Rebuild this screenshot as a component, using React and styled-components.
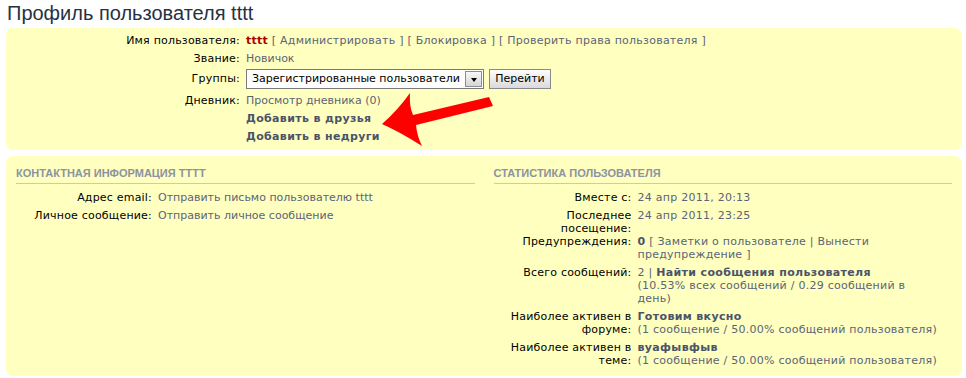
import React from "react";
import styled, { createGlobalStyle } from "styled-components";

const GlobalStyle = createGlobalStyle`
  body {
    margin: 0;
    background: #fff;
    font-family: "DejaVu Sans", Verdana, sans-serif;
    font-size: 11px;
    color: #000;
  }
`;

const Page = styled.div`
  position: relative;
  width: 966px;
  padding: 0 4px 0 6px;
  box-sizing: border-box;
`;

const Title = styled.h2`
  margin: 0;
  height: 28px;
  line-height: 26px;
  padding-left: 1px;
  font-family: "Liberation Sans", Arial, sans-serif;
  font-weight: normal;
  font-size: 20px;
  color: #28313f;
`;

const Panel = styled.div`
  background: #ffffc0;
  border-radius: 7px;
  padding: ${(p) => p.$padding || "10px"};
  margin-bottom: 6px;
`;

const Columns = styled.div`
  display: grid;
  grid-template-columns: 1fr 1fr;
  column-gap: 19px;
`;

const Heading = styled.h3`
  margin: 0 0 7px;
  padding-bottom: 3px;
  border-bottom: 1px solid #c9c9c4;
  font-family: "Liberation Sans", Arial, sans-serif;
  font-size: 11px;
  line-height: 14px;
  font-weight: bold;
  text-transform: uppercase;
  color: #8c93a0;
`;

const Row = styled.div`
  display: grid;
  grid-template-columns: ${(p) => p.$label}px 1fr;
  column-gap: 6px;
  line-height: ${(p) => p.$line || 13}px;
  padding: ${(p) => p.$pad || "0"};
  margin-bottom: ${(p) => (p.$flush ? 0 : p.$gap || 0)}px;
`;

const Label = styled.div`
  text-align: right;
  color: #000;
  letter-spacing: 0.2px;
`;

const Value = styled.div`
  color: #5a6478;
  letter-spacing: ${(p) => (p.$wide ? "0.25px" : "0")};
`;

const Name = styled.b`
  color: #aa0000;
`;

const Strong = styled.b`
  color: #4a5468;
  letter-spacing: 0.35px;
`;

const Select = styled.div`
  display: flex;
  align-items: center;
  justify-content: space-between;
  box-sizing: border-box;
  width: 238px;
  height: 20px;
  border: 1px solid #7b7b7b;
  background: #fff;
  padding: 0 1px 0 5px;
  color: #000;
`;

const DropButton = styled.span`
  display: flex;
  align-items: center;
  justify-content: center;
  box-sizing: border-box;
  width: 17px;
  height: 16px;
  border: 1px solid #8e8e8e;
  background: linear-gradient(#f8f8f8, #d6d6d6);
`;

const Triangle = styled.span`
  width: 0;
  height: 0;
  border-left: 3.5px solid transparent;
  border-right: 3.5px solid transparent;
  border-top: 4px solid #000;
  margin-top: 2px;
`;

const Controls = styled.div`
  display: flex;
  gap: 5px;
`;

const Button = styled.span`
  display: flex;
  align-items: center;
  justify-content: center;
  box-sizing: border-box;
  width: 62px;
  height: 20px;
  border: 1px solid #8a8a8a;
  background: linear-gradient(#fdfdfd, #dadada);
  color: #000;
`;

const Arrow = styled.svg`
  position: absolute;
  left: 0;
  top: 0;
  pointer-events: none;
`;

export default function App() {
  return (
    <Page>
      <GlobalStyle />
      <Title>Профиль пользователя tttt</Title>

      <Panel $padding="4px 10px 4px">
        <Row $label={224} $line={18}>
          <Label>Имя пользователя:</Label>
          <Value $wide>
            <Name>tttt</Name> [ Администрировать ] [ Блокировка ] [ Проверить права пользователя ]
          </Value>
        </Row>
        <Row $label={224} $line={18}>
          <Label>Звание:</Label>
          <Value>Новичок</Value>
        </Row>
        <Row $label={224} $line={20} $pad="1px 0 3px">
          <Label>Группы:</Label>
          <Controls>
            <Select>
              Зарегистрированные пользователи
              <DropButton>
                <Triangle />
              </DropButton>
            </Select>
            <Button>Перейти</Button>
          </Controls>
        </Row>
        <Row $label={224} $line={18}>
          <Label>Дневник:</Label>
          <Value>Просмотр дневника (0)</Value>
        </Row>
        <Row $label={224} $line={18}>
          <Label />
          <Value>
            <Strong>Добавить в друзья</Strong>
          </Value>
        </Row>
        <Row $label={224} $line={18}>
          <Label />
          <Value>
            <Strong>Добавить в недруги</Strong>
          </Value>
        </Row>
      </Panel>

      <Panel $padding="10px 10px 9px">
        <Columns>
          <div>
            <Heading>Контактная информация tttt</Heading>
            <Row $label={136} $gap={5}>
              <Label>Адрес email:</Label>
              <Value>Отправить письмо пользователю tttt</Value>
            </Row>
            <Row $label={136} $gap={5}>
              <Label>Личное сообщение:</Label>
              <Value>Отправить личное сообщение</Value>
            </Row>
          </div>
          <div>
            <Heading>Статистика пользователя</Heading>
            <Row $label={138} $gap={5}>
              <Label>Вместе с:</Label>
              <Value $wide>24 апр 2011, 20:13</Value>
            </Row>
            <Row $label={138} $flush>
              <Label>
                Последнее
                <br />
                посещение:
              </Label>
              <Value $wide>24 апр 2011, 23:25</Value>
            </Row>
            <Row $label={138} $gap={5}>
              <Label>Предупреждения:</Label>
              <Value $wide>
                <Strong>0</Strong> [ Заметки о пользователе | Вынести
                <br />
                предупреждение ]
              </Value>
            </Row>
            <Row $label={138} $gap={5}>
              <Label>Всего сообщений:</Label>
              <Value $wide>
                2 | <Strong>Найти сообщения пользователя</Strong>
                <br />
                (10.53% всех сообщений / 0.29 сообщений в
                <br />
                день)
              </Value>
            </Row>
            <Row $label={138} $gap={5}>
              <Label>Наиболее активен в форуме:</Label>
              <Value $wide>
                <Strong>Готовим вкусно</Strong>
                <br />
                (1 сообщение / 50.00% сообщений пользователя)
              </Value>
            </Row>
            <Row $label={138}>
              <Label>Наиболее активен в теме:</Label>
              <Value $wide>
                <Strong>вуафывфыв</Strong>
                <br />
                (1 сообщение / 50.00% сообщений пользователя)
              </Value>
            </Row>
          </div>
        </Columns>
      </Panel>

      <Arrow width="966" height="378" viewBox="0 0 966 378">
        <path
          d="M382 124 Q398 110 410 93 Q409 106 413 115 L489 97 L493 106 L416 125 Q417 136 422 146 Q400 132 382 124 Z"
          fill="#ff0000"
        />
      </Arrow>
    </Page>
  );
}
